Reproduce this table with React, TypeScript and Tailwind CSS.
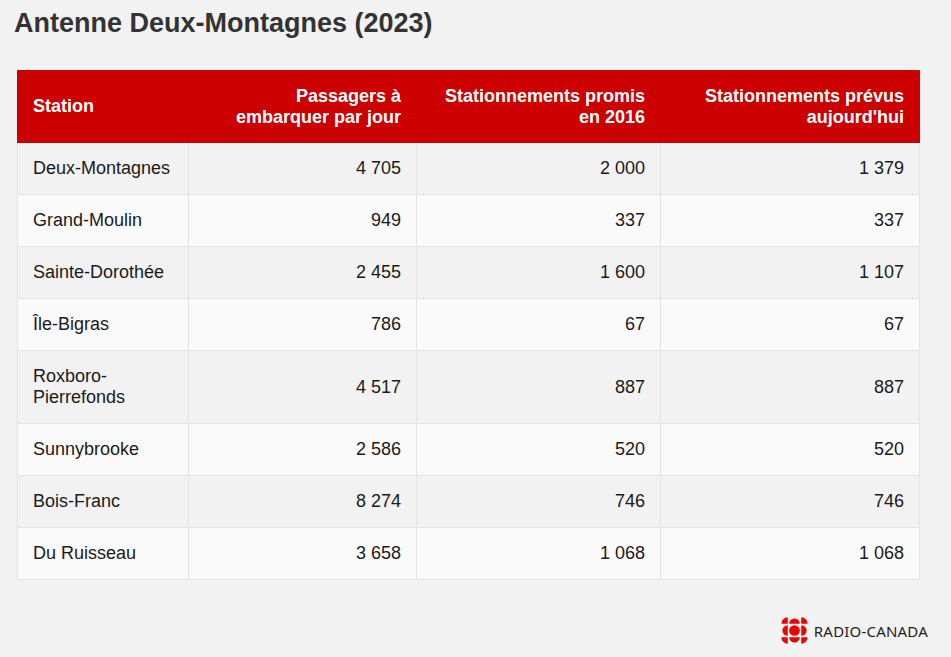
import React from "react";

const rows = [
  ["Deux-Montagnes", "4 705", "2 000", "1 379"],
  ["Grand-Moulin", "949", "337", "337"],
  ["Sainte-Dorothée", "2 455", "1 600", "1 107"],
  ["Île-Bigras", "786", "67", "67"],
  ["Roxboro-Pierrefonds", "4 517", "887", "887"],
  ["Sunnybrooke", "2 586", "520", "520"],
  ["Bois-Franc", "8 274", "746", "746"],
  ["Du Ruisseau", "3 658", "1 068", "1 068"],
];

function Gem() {
  // CBC / Radio-Canada gem
  return (
    <svg width="27" height="27" viewBox="12 12 76 76" fill="#e60505">
      <circle cx="50" cy="50" r="15" />
      <path d="M35 31 A15 15 0 0 1 65 31 Z" />
      <path d="M35 69 A15 15 0 0 0 65 69 Z" />
      <path d="M31 35 A15 15 0 0 0 31 65 Z" />
      <path d="M69 35 A15 15 0 0 1 69 65 Z" />
      <path d="M31 31 L13 31 A18 18 0 0 1 31 13 Z" />
      <path d="M69 31 L69 13 A18 18 0 0 1 87 31 Z" />
      <path d="M31 69 L31 87 A18 18 0 0 1 13 69 Z" />
      <path d="M69 69 L87 69 A18 18 0 0 1 69 87 Z" />
    </svg>
  );
}

export default function App() {
  const cell = "px-[15px] py-[15px] border-r border-[#e3e3e3] flex items-center";
  return (
    <div className="min-h-screen w-full bg-[#f2f2f2] font-['Liberation_Sans',Arial,sans-serif] flex flex-col">
      <h1 className="pt-[8px] px-[14px] text-[27px] leading-[31px] font-bold text-[#333333]">
        Antenne Deux-Montagnes (2023)
      </h1>

      <div className="mt-[31px] ml-[17px] w-[903px]">
        <div className="grid grid-cols-[172px_228px_244px_259px] bg-[#cc0000] text-white font-bold text-[18px] leading-[21px]">
          <div className="px-[16px] py-[15.5px] flex items-center">Station</div>
          <div className="pl-[15px] pr-[16px] py-[15.5px] text-right">Passagers à embarquer par jour</div>
          <div className="pl-[15px] pr-[16px] py-[15.5px] text-right">Stationnements promis en 2016</div>
          <div className="pl-[15px] pr-[16px] py-[15.5px] text-right">Stationnements prévus aujourd'hui</div>
        </div>

        {rows.map((r, i) => (
          <div
            key={r[0]}
            className={`grid grid-cols-[171px_228px_244px_259px] text-[18px] leading-[21px] text-[#1a1a1a] border-l border-b border-[#e3e3e3] ${
              i % 2 === 0 ? "bg-[#f2f2f2]" : "bg-[#fafafa]"
            }`}
          >
            <div className={cell}>{r[0]}</div>
            <div className={`${cell} justify-end`}>{r[1]}</div>
            <div className={`${cell} justify-end`}>{r[2]}</div>
            <div className={`${cell} justify-end`}>{r[3]}</div>
          </div>
        ))}
      </div>

      <div className="mt-[37px] mr-[23px] flex justify-end items-center gap-[6px]">
        <Gem />
        <span className="text-[15px] leading-[18px] text-[#222222] tracking-[0.2px] font-['Noto_Sans',sans-serif]">
          RADIO-CANADA
        </span>
      </div>
    </div>
  );
}
